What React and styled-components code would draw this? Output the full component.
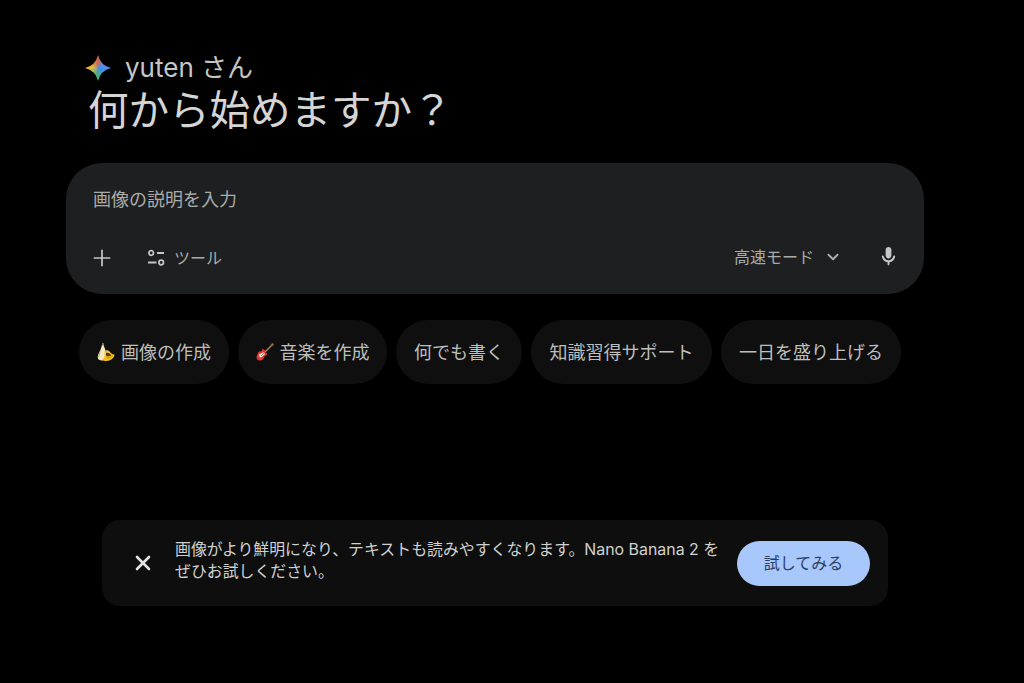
import React from "react";
import styled, { createGlobalStyle } from "styled-components";
import { Plus, ChevronDown, X } from "lucide-react";

const GlobalStyle = createGlobalStyle`
  html, body {
    margin: 0;
    padding: 0;
    background: #000;
  }
  body {
    font-family: "Inter", "Noto Sans CJK JP", sans-serif;
  }
`;

const chips = [
  { label: "画像の作成", icon: "banana", width: 150 },
  { label: "音楽を作成", icon: "guitar", width: 149 },
  { label: "何でも書く", width: 126 },
  { label: "知識習得サポート", width: 181 },
  { label: "一日を盛り上げる", width: 180 },
];

const BananaIcon = () => (
  <svg width="18" height="18" viewBox="0 0 18 18">
    <path d="M5 0.5 L6.8 0.5 L7.2 4 C8.5 6 9 9 8.5 12 C8.2 14.5 7 16.5 5 17.5 C2.5 17.5 1 16.5 0.8 15 C0.5 11 3 9 3.8 6 C4.3 4 5.2 2.5 5 0.5 Z" fill="#f3e7c4" />
    <path d="M2.5 9 C1.5 11 1 13 1.5 15.5 C2.5 13.5 3.5 11.5 3.5 8 Z" fill="#c9b27a" />
    <path d="M5 0.5 L6.8 0.5 L6.9 2.5 L5.2 2.5 Z" fill="#7f6a34" />
    <path d="M7.5 8.5 C9 6.5 11.5 7 13 9 C14.5 11 16 11.5 17.5 11.5 C17.5 15 13.5 18 9.5 18 C7.5 18 6 17.8 5 17.5 C7 16 8.2 12 7.5 8.5 Z" fill="#f6c21c" />
    <path d="M9 10 C11 9 13 10.5 14.5 12.5 C12.5 13.5 10.5 13.5 9 12.5 Z" fill="#4a3a12" />
    <path d="M9 12.5 C11 14 14 14 16 12.5 C15 15 12 16 9.5 15.5 Z" fill="#e09c10" />
  </svg>
);

const GuitarIcon = () => (
  <svg width="18" height="18" viewBox="0 0 18 18">
    <path d="M7.5 10.5 L15.5 2.5" stroke="#b08a5a" strokeWidth="1.4" strokeLinecap="round" />
    <path d="M14.5 1.8 L16.5 0 L18 1.5 L16.2 3.5 Z" fill="#8a6a3c" />
    <path d="M6.8 5.5 C7.5 6.5 8.2 7.2 9.5 7.5 L8.5 9.2 C10 9.5 11.5 9.8 11 11.3 C10.5 12.5 9 12.5 8.3 14 C7.5 16 6 18 3.5 17.5 C1 17 -0.3 15 1 12.5 C1.7 11.2 1.5 9.8 2.5 9 C3.8 8.2 5 8.8 5.6 8 C6.2 7.2 6.2 6.5 6.8 5.5 Z" fill="#e0392f" />
    <path d="M3 11.5 L7.5 9.3 L9 11 L5 14.5 C3.8 14.5 3 13 3 11.5 Z" fill="#f6efe6" />
    <path d="M5 13 L8 10.3" stroke="#6b6b6b" strokeWidth="0.9" />
  </svg>
);

const ToolsIcon = () => (
  <svg width="18" height="18" viewBox="0 0 18 18" fill="none" stroke="#c4c7c5">
    <circle cx="4.2" cy="5" r="2.3" strokeWidth="1.7" />
    <path d="M10 5 H17 M1 14.5 H9.5" strokeWidth="1.8" />
    <circle cx="14.2" cy="14.5" r="2.3" strokeWidth="1.7" />
  </svg>
);

const MicIcon = () => (
  <svg width="23" height="23" viewBox="0 0 24 24" fill="#c4c7c5">
    <path d="M12 14c1.66 0 3-1.34 3-3V5c0-1.66-1.34-3-3-3S9 3.34 9 5v6c0 1.66 1.34 3 3 3zm5.91-3c-.49 0-.9.36-.98.85C16.52 14.2 14.47 16 12 16s-4.52-1.8-4.93-4.15c-.08-.49-.49-.85-.98-.85-.61 0-1.09.54-1 1.14.49 3 2.89 5.35 5.91 5.78V20c0 .55.45 1 1 1s1-.45 1-1v-2.08c3.02-.43 5.42-2.78 5.91-5.78.1-.6-.39-1.14-1-1.14z" />
  </svg>
);

const App = () => {
  return (
    <Page>
      <GlobalStyle />
      <Greeting>
        <Spark />
        <Name>yuten さん</Name>
      </Greeting>
      <Title>何から始めますか？</Title>
      <PromptBox>
        <Placeholder>画像の説明を入力</Placeholder>
        <PromptActions>
          <PlusButton>
            <Plus size={26} strokeWidth={1.6} />
          </PlusButton>
          <ToolsButton>
            <ToolsIcon />
            ツール
          </ToolsButton>
          <ModeButton>
            <ModeLabel>高速モード</ModeLabel>
            <ChevronDown size={18} strokeWidth={2.6} />
          </ModeButton>
          <MicButton>
            <MicIcon />
          </MicButton>
        </PromptActions>
      </PromptBox>
      <ChipRow>
        {chips.map((chip) => (
          <Chip key={chip.label} $width={chip.width}>
            {chip.icon === "banana" && <BananaIcon />}
            {chip.icon === "guitar" && <GuitarIcon />}
            <ChipLabel>{chip.label}</ChipLabel>
          </Chip>
        ))}
      </ChipRow>
      <Banner>
        <CloseButton>
          <X size={24} strokeWidth={2.6} />
        </CloseButton>
        <BannerText>
          画像がより鮮明になり、テキストも読みやすくなります。Nano Banana 2 を
          <br />
          ぜひお試しください。
        </BannerText>
        <TryButton>試してみる</TryButton>
      </Banner>
    </Page>
  );
};

export default App;

const Page = styled.div`
  width: 1024px;
  height: 683px;
  box-sizing: border-box;
  background: #000;
  padding: 52px 0 0 66px;
  overflow: hidden;
`;

const Greeting = styled.div`
  display: flex;
  align-items: center;
  gap: 14px;
  padding-left: 19px;
  height: 32px;
`;

const Spark = styled.div`
  width: 26px;
  height: 26px;
  background: radial-gradient(circle at 55% 55%, rgba(70, 140, 220, 0.7) 0, rgba(70, 140, 220, 0) 38%),
    conic-gradient(from 0deg, #d9654f 0deg, #5b8df0 60deg, #4a90f0 110deg, #3fa6a0 150deg, #4fb36a 190deg, #a9c24a 230deg, #f2b632 280deg, #ea7a3c 330deg, #d9654f 360deg);
  clip-path: path("M13 0 Q15.5 10.5 26 13 Q15.5 15.5 13 26 Q10.5 15.5 0 13 Q10.5 10.5 13 0 Z");
`;

const Name = styled.div`
  font-size: 26px;
  line-height: 32px;
  color: #c4c7c5;
`;

const Title = styled.h1`
  margin: 0;
  padding: 2px 0 0 22px;
  font-size: 40.5px;
  line-height: 50px;
  font-weight: 400;
  color: #d4d5d4;
`;

const PromptBox = styled.div`
  width: 858px;
  height: 131px;
  margin-top: 27px;
  box-sizing: border-box;
  background: #1e1f20;
  border-radius: 36px;
  padding: 26px 24px 0 27px;
`;

const Placeholder = styled.div`
  font-size: 18px;
  line-height: 22px;
  color: #a9acaa;
`;

const PromptActions = styled.div`
  display: flex;
  align-items: center;
  margin-top: 33px;
  color: #c4c7c5;
  height: 26px;
`;

const PlusButton = styled.div`
  display: flex;
  margin-left: -4px;
  margin-top: 1px;
  color: #c4c7c5;
`;

const ToolsButton = styled.div`
  display: flex;
  align-items: center;
  gap: 9px;
  margin-left: 32px;
  font-size: 16px;
  color: #a9acaa;
`;

const ModeButton = styled.div`
  display: flex;
  align-items: center;
  gap: 10px;
  margin-left: auto;
  font-size: 16px;
  color: #a9acaa;
`;

const ModeLabel = styled.span`
  padding-bottom: 2px;
`;

const MicButton = styled.div`
  display: flex;
  margin-left: 35px;
  margin-bottom: 2px;
  color: #c4c7c5;
`;

const ChipRow = styled.div`
  display: flex;
  gap: 9px;
  margin-top: 26px;
  margin-left: 13px;
`;

const Chip = styled.div`
  display: flex;
  align-items: center;
  justify-content: center;
  gap: 6px;
  width: ${(props) => props.$width}px;
  height: 64px;
  border-radius: 32px;
  background: #0f0f0f;
  white-space: nowrap;
`;

const ChipLabel = styled.span`
  font-size: 18px;
  color: #bcbfbd;
  padding-bottom: 3px;
`;

const Banner = styled.div`
  display: flex;
  align-items: center;
  width: 786px;
  height: 86px;
  box-sizing: border-box;
  margin-top: 136px;
  margin-left: 36px;
  padding: 0 18px 0 29px;
  background: #0e0e0e;
  border-radius: 18px;
`;

const CloseButton = styled.div`
  display: flex;
  color: #e3e3e3;
`;

const BannerText = styled.div`
  flex: 1;
  margin-left: 20px;
  padding-bottom: 4px;
  font-size: 15.9px;
  line-height: 22.5px;
  color: #d0d2d1;
  white-space: nowrap;
`;

const TryButton = styled.div`
  display: flex;
  align-items: center;
  justify-content: center;
  width: 133px;
  height: 45px;
  box-sizing: border-box;
  padding-bottom: 2px;
  border-radius: 23px;
  background: #a8c7fa;
  color: #2a3f6a;
  font-size: 16px;
`;
